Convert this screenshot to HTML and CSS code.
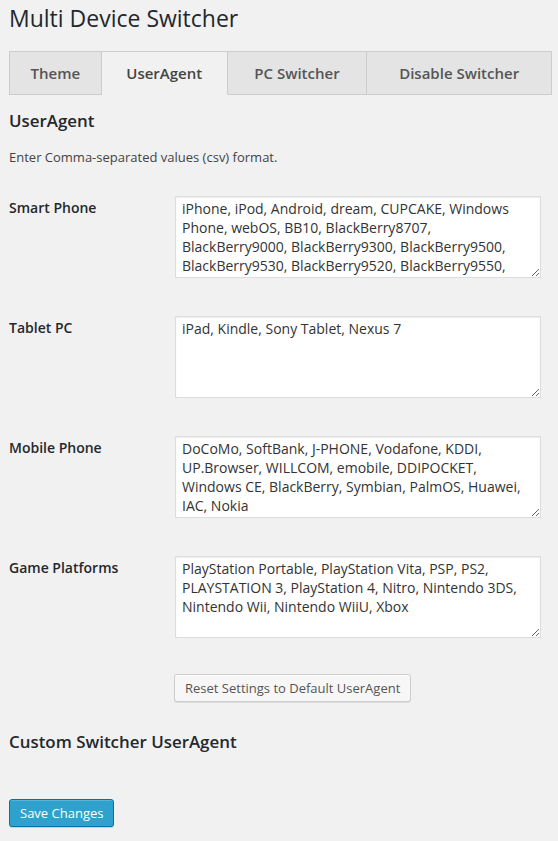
FILE: index.html
```html
<!DOCTYPE html>
<html lang="en">
<head>
<meta charset="utf-8">
<title>Multi Device Switcher</title>
<link rel="stylesheet" href="styles.css">
</head>
<body>
<div class="wrap">
  <h1 class="page-title">Multi Device Switcher</h1>
  <nav class="tabs">
    <span class="tab tab-theme">Theme</span>
    <span class="tab tab-ua active">UserAgent</span>
    <span class="tab tab-pc">PC Switcher</span>
    <span class="tab tab-disable">Disable Switcher</span>
  </nav>

  <h3 class="section-title">UserAgent</h3>
  <p class="desc">Enter Comma-separated values (csv) format.</p>

  <div class="fields">
    <div class="field">
      <label class="field-label">Smart Phone</label>
      <textarea class="field-input" rows="4">iPhone, iPod, Android, dream, CUPCAKE, Windows Phone, webOS, BB10, BlackBerry8707, BlackBerry9000, BlackBerry9300, BlackBerry9500, BlackBerry9530, BlackBerry9520, BlackBerry9550, BlackBerry9800, BlackBerry9850, BlackBerry9860, BlackBerry9780, BlackBerry9790, BlackBerry9900, BlackBerry9930, BlackBerry9980, BlackBerry9360, BlackBerry9810, BlackBerry9710</textarea>
    </div>
    <div class="field">
      <label class="field-label">Tablet PC</label>
      <textarea class="field-input" rows="4">iPad, Kindle, Sony Tablet, Nexus 7</textarea>
    </div>
    <div class="field">
      <label class="field-label">Mobile Phone</label>
      <textarea class="field-input" rows="4">DoCoMo, SoftBank, J-PHONE, Vodafone, KDDI, UP.Browser, WILLCOM, emobile, DDIPOCKET, Windows CE, BlackBerry, Symbian, PalmOS, Huawei, IAC, Nokia</textarea>
    </div>
    <div class="field">
      <label class="field-label">Game Platforms</label>
      <textarea class="field-input" rows="4">PlayStation Portable, PlayStation Vita, PSP, PS2, PLAYSTATION 3, PlayStation 4, Nitro, Nintendo 3DS, Nintendo Wii, Nintendo WiiU, Xbox</textarea>
    </div>
  </div>

  <div class="reset-row">
    <button class="button" type="button">Reset Settings to Default UserAgent</button>
  </div>

  <h3 class="section-title custom-title">Custom Switcher UserAgent</h3>

  <div class="submit-row">
    <button class="button button-primary" type="submit">Save Changes</button>
  </div>
</div>
</body>
</html>
```

FILE: styles.css
```css
html, body {
  margin: 0;
  padding: 0;
  background: #f1f1f1;
}

body {
  font-family: "Open Sans", "DejaVu Sans", sans-serif;
  font-size: 13px;
  color: #444;
}

.wrap {
  padding: 4px 6px 0 9px;
}

.page-title {
  margin: 0;
  font-size: 23px;
  line-height: 29px;
  font-weight: 400;
  color: #23282d;
}

.tabs {
  display: flex;
  margin-top: 18px;
}

.tab {
  box-sizing: border-box;
  height: 44px;
  display: flex;
  align-items: center;
  justify-content: center;
  border-top: 1px solid #ccc;
  border-right: 1px solid #ccc;
  border-bottom: 1px solid #ccc;
  background: #e4e4e4;
  color: #555;
  font-size: 15px;
  font-weight: 600;
}

.tab-theme {
  width: 93px;
  border-left: 1px solid #ccc;
}

.tab-ua { width: 126px; }
.tab-pc { width: 140px; }
.tab-disable { width: 185px; }

.tab.active {
  background: #f1f1f1;
  border-bottom-color: #f1f1f1;
  color: #444;
}

.section-title {
  margin: 15px 0 0;
  font-size: 16.9px;
  line-height: 22px;
  font-weight: 600;
  color: #23282d;
}

.desc {
  margin: 16px 0 0;
  line-height: 18px;
  font-size: 13px;
  color: #444;
}

.fields {
  margin-top: 11px;
}

.field {
  display: flex;
  align-items: flex-start;
  padding: 19px 0;
}

.field-label {
  box-sizing: border-box;
  width: 166px;
  flex: none;
  padding-top: 3px;
  font-size: 14px;
  line-height: 18.2px;
  font-weight: 600;
  color: #23282d;
}

.field-input {
  display: block;
  box-sizing: border-box;
  width: 366px;
  height: 82px;
  margin: 0;
  padding: 2px 6px;
  border: 1px solid #ddd;
  border-radius: 0;
  background: #fff;
  box-shadow: inset 0 1px 2px rgba(0, 0, 0, 0.07);
  font-family: "Open Sans", "DejaVu Sans", sans-serif;
  font-size: 14px;
  line-height: 19px;
  color: #333;
  overflow: hidden;
  resize: vertical;
}

.reset-row {
  padding-left: 165px;
  margin-top: 17px;
}

.button {
  box-sizing: border-box;
  height: 28px;
  margin: 0;
  padding: 0 10px 1px;
  border: 1px solid #ccc;
  border-radius: 3px;
  background: #f7f7f7;
  box-shadow: inset 0 1px 0 #fff, 0 1px 0 rgba(0, 0, 0, 0.08);
  font-family: "Open Sans", "DejaVu Sans", sans-serif;
  font-size: 13px;
  line-height: 26px;
  color: #555;
  white-space: nowrap;
  cursor: pointer;
}

.button-primary {
  background: #2ea2cc;
  border-color: #0074a2;
  color: #fff;
  box-shadow: inset 0 1px 0 rgba(120, 200, 230, 0.5), 0 1px 0 rgba(0, 0, 0, 0.15);
}

.custom-title {
  margin-top: 29px;
}

.submit-row {
  margin-top: 46px;
  padding-bottom: 14px;
}
```
